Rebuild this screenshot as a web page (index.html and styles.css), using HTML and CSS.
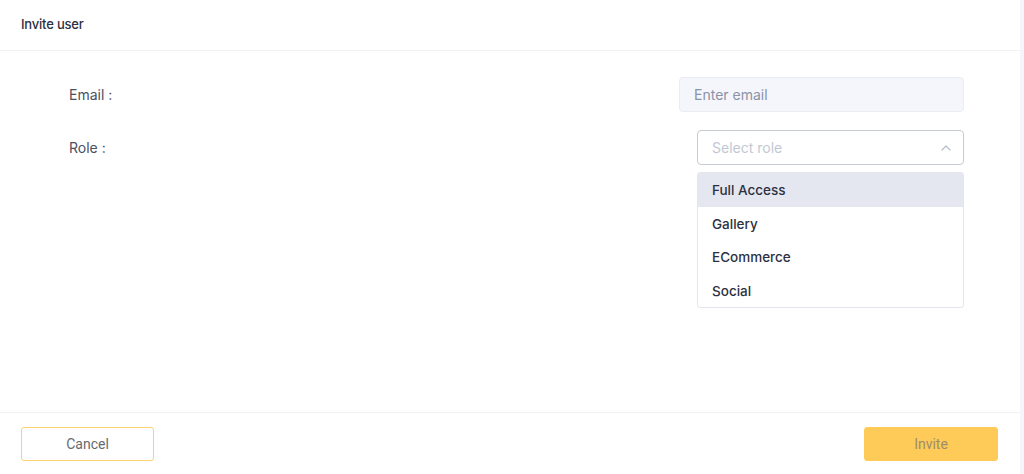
FILE: index.html
```html
<!DOCTYPE html>
<html lang="en">
<head>
<meta charset="utf-8">
<title>Invite user</title>
<link rel="stylesheet" href="styles.css">
</head>
<body>
<div class="shell">
  <div class="modal">
    <header class="modal-header">
      <h1 class="modal-title">Invite user</h1>
    </header>
    <main class="modal-body">
      <div class="form-row">
        <label class="form-label">Email :</label>
        <div class="email-input">Enter email</div>
      </div>
      <div class="form-row">
        <label class="form-label">Role :</label>
        <div class="select-wrap">
          <div class="select-box">
            <span class="select-placeholder">Select role</span>
            <svg class="chevron" width="10" height="6" viewBox="0 0 10 6"><path d="M1 5 L5 1 L9 5" fill="none" stroke="#b9bfca" stroke-width="1.3" stroke-linecap="round" stroke-linejoin="round"/></svg>
          </div>
          <ul class="dropdown">
            <li class="option active">Full Access</li>
            <li class="option">Gallery</li>
            <li class="option">ECommerce</li>
            <li class="option">Social</li>
          </ul>
        </div>
      </div>
    </main>
    <footer class="modal-footer">
      <button class="btn btn-cancel">Cancel</button>
      <button class="btn btn-invite">Invite</button>
    </footer>
  </div>
  <div class="scroll-strip"></div>
</div>
</body>
</html>
```

FILE: styles.css
```css
* { box-sizing: border-box; }
html, body { margin: 0; padding: 0; background: #fff; }
body { font-family: Inter, "Noto Sans", sans-serif; width: 1024px; height: 474px; overflow: hidden; }

.shell { display: flex; height: 474px; }
.modal { width: 1020px; display: flex; flex-direction: column; height: 100%; background: #fff; }
.scroll-strip { width: 4px; background: #f5f6fb; }

.modal-header {
  height: 51px;
  border-bottom: 1px solid #eff1f5;
  display: flex;
  align-items: center;
  padding: 0 21px 2px;
}
.modal-title { margin: 0; font-size: 13px; font-weight: 500; color: #2b3042; letter-spacing: -0.2px; }

.modal-body {
  flex: 1;
  padding: 26px 56px 0 69px;
  display: flex;
  flex-direction: column;
  gap: 18px;
  background: #fff;
}
.form-row { display: flex; justify-content: space-between; align-items: flex-start; }
.form-label { font-size: 14px; color: #4a5064; line-height: 35px; }

.email-input {
  width: 285px; height: 35px;
  background: #f4f6fb;
  border: 1px solid #e9ecf2;
  border-radius: 4px;
  padding: 0 14px;
  font-size: 14px; color: #8a93a7;
  line-height: 33px;
}

.select-wrap { width: 267px; position: relative; }
.select-box {
  height: 35px;
  border: 1px solid #c6cbd4;
  border-radius: 4px;
  background: #fff;
  display: flex; align-items: center; justify-content: space-between;
  padding: 0 12px 0 14px;
}
.select-placeholder { font-size: 14px; color: #c2c8d3; }
.chevron { display: block; }

.dropdown {
  position: absolute; left: 0; right: 0; top: 42px;
  margin: 0; padding: 0; list-style: none;
  background: #fff;
  border: 1px solid #e3e6ec;
  border-radius: 3px;
  overflow: hidden;
}
.option {
  height: 33.5px; line-height: 33px;
  padding: 1px 14px 0;
  font-size: 13.5px; font-weight: 500; color: #2c3142;
}
.option.active { background: #e4e7ef; }

.modal-footer {
  height: 62px;
  border-top: 1px solid #eff1f5;
  display: flex; justify-content: space-between; align-items: flex-start;
  padding: 14px 22px 0 21px;
  background: #fff;
}
.btn {
  height: 34px; width: 133px;
  border-radius: 3px;
  font-family: Roboto, "Liberation Sans", sans-serif;
  font-size: 14px;
  cursor: pointer;
}
.btn-cancel { background: #fff; border: 1px solid #fbd26c; color: #666a70; }
.btn-invite { width: 134px; background: #fecb58; border: 1px solid #fecb58; color: #a08c68; }
```
